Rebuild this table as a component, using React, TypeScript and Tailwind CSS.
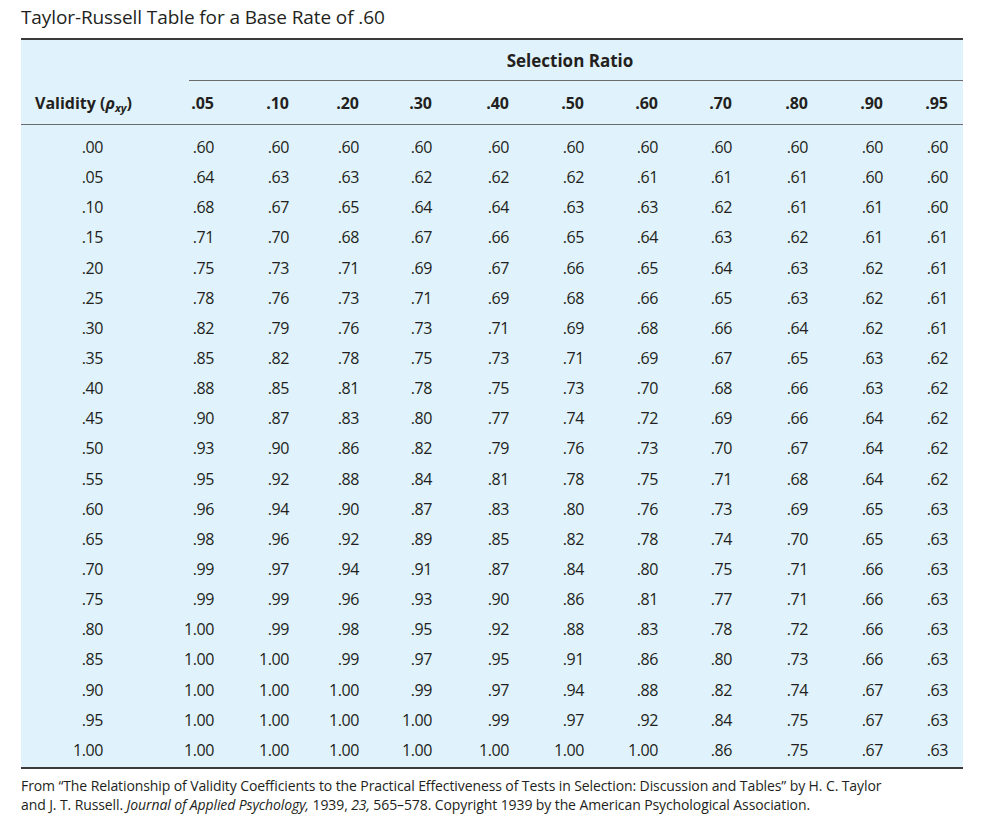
import React from "react";

const ratios = [".05", ".10", ".20", ".30", ".40", ".50", ".60", ".70", ".80", ".90", ".95"];

const rows: [string, string][] = [
  [".00", ".60 .60 .60 .60 .60 .60 .60 .60 .60 .60 .60"],
  [".05", ".64 .63 .63 .62 .62 .62 .61 .61 .61 .60 .60"],
  [".10", ".68 .67 .65 .64 .64 .63 .63 .62 .61 .61 .60"],
  [".15", ".71 .70 .68 .67 .66 .65 .64 .63 .62 .61 .61"],
  [".20", ".75 .73 .71 .69 .67 .66 .65 .64 .63 .62 .61"],
  [".25", ".78 .76 .73 .71 .69 .68 .66 .65 .63 .62 .61"],
  [".30", ".82 .79 .76 .73 .71 .69 .68 .66 .64 .62 .61"],
  [".35", ".85 .82 .78 .75 .73 .71 .69 .67 .65 .63 .62"],
  [".40", ".88 .85 .81 .78 .75 .73 .70 .68 .66 .63 .62"],
  [".45", ".90 .87 .83 .80 .77 .74 .72 .69 .66 .64 .62"],
  [".50", ".93 .90 .86 .82 .79 .76 .73 .70 .67 .64 .62"],
  [".55", ".95 .92 .88 .84 .81 .78 .75 .71 .68 .64 .62"],
  [".60", ".96 .94 .90 .87 .83 .80 .76 .73 .69 .65 .63"],
  [".65", ".98 .96 .92 .89 .85 .82 .78 .74 .70 .65 .63"],
  [".70", ".99 .97 .94 .91 .87 .84 .80 .75 .71 .66 .63"],
  [".75", ".99 .99 .96 .93 .90 .86 .81 .77 .71 .66 .63"],
  [".80", "1.00 .99 .98 .95 .92 .88 .83 .78 .72 .66 .63"],
  [".85", "1.00 1.00 .99 .97 .95 .91 .86 .80 .73 .66 .63"],
  [".90", "1.00 1.00 1.00 .99 .97 .94 .88 .82 .74 .67 .63"],
  [".95", "1.00 1.00 1.00 1.00 .99 .97 .92 .84 .75 .67 .63"],
  ["1.00", "1.00 1.00 1.00 1.00 1.00 1.00 1.00 .86 .75 .67 .63"],
];

// column tracks: validity | 11 ratio columns (right aligned) | right gutter
const cols =
  "grid grid-cols-[82px_111px_75px_70px_73px_77px_75px_74px_74px_76px_75px_65px_15px]";

export default function App() {
  return (
    <div className="min-h-screen bg-white text-[#231f20] font-['Open_Sans','Noto_Sans',sans-serif]">
      <div className="pl-[21px] pr-[31px]">
        {/* title */}
        <div className="h-[38px] pt-[5px] text-[19px] leading-[24px] tracking-[-0.1px]">
          Taylor-Russell Table for a Base Rate of .60
        </div>

        <div className="border-t-2 border-b-2 border-[#3a3a3a] bg-[#e0f2fb]">
          {/* Selection Ratio */}
          <div className="flex">
            <div className="w-[168px] shrink-0" />
            <div className="flex h-[41px] flex-1 items-center justify-center border-b-[1.5px] border-[#6b6b6b] pr-[12px] pt-[1px] text-[17px] font-bold tracking-[0px]">
              Selection Ratio
            </div>
          </div>

          {/* header row */}
          <div className={`${cols} h-[44px] items-center border-b-[1.5px] border-[#6b6b6b] text-[16px] font-bold tracking-[0px]`}>
            <div className="whitespace-nowrap pl-[14px] pt-[1px]">
              Validity (<i>ρ</i>
              <sub className="text-[11px] font-bold italic">xy</sub>)
            </div>
            {ratios.map((r) => (
              <div key={r} className="pt-[1px] text-right">
                {r}
              </div>
            ))}
            <div />
          </div>

          {/* body */}
          <div className="pb-[2px] pt-[7px] text-[16px] tracking-[-0.4px]">
            {rows.map(([v, vals]) => (
              <div key={v} className={`${cols} h-[30.15px] items-center`}>
                <div className="text-right">{v}</div>
                {vals.split(" ").map((x, i) => (
                  <div key={i} className="text-right">
                    {x}
                  </div>
                ))}
                <div />
              </div>
            ))}
          </div>
        </div>

        {/* source note */}
        <div className="pt-[7px] text-[14px] leading-[19px] tracking-[-0.1px]">
          From “The Relationship of Validity Coefficients to the Practical Effectiveness of Tests in
          Selection: Discussion and Tables” by H. C. Taylor
          <br />
          and J. T. Russell. <i>Journal of Applied Psychology,</i> 1939, <i>23,</i> 565–578.
          Copyright 1939 by the American Psychological Association.
        </div>
      </div>
    </div>
  );
}
